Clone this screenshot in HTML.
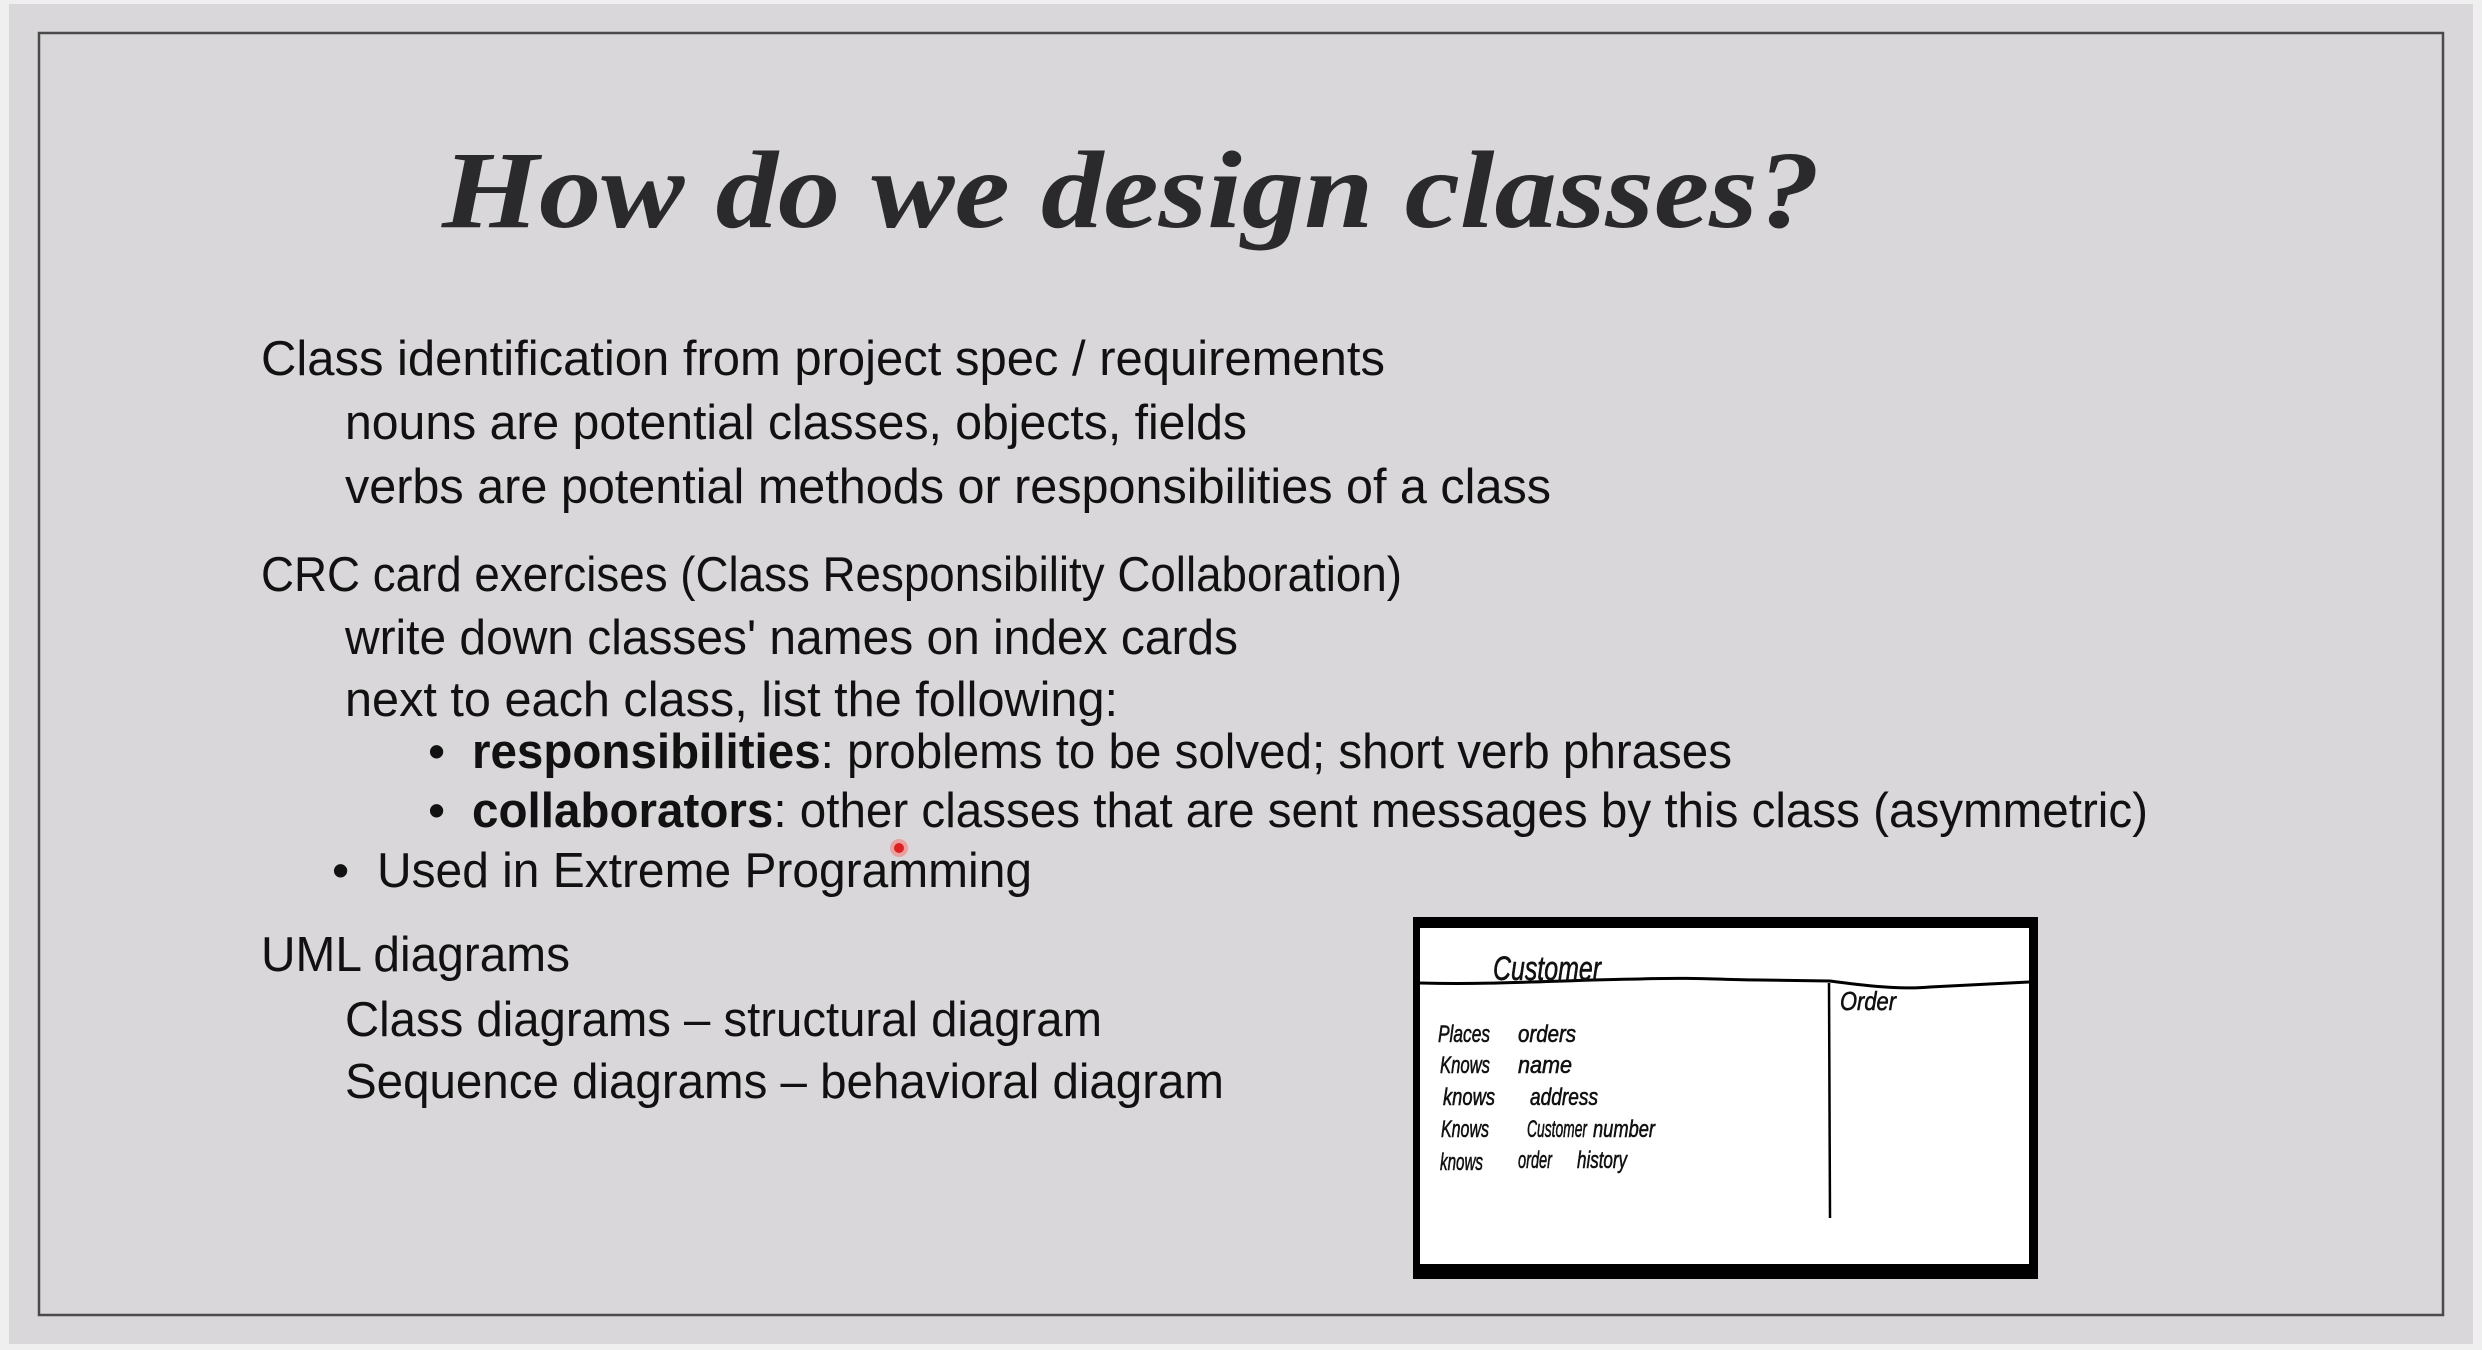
<!DOCTYPE html>
<html><head><meta charset="utf-8"><style>
html,body{margin:0;padding:0;background:#e6e5e6;}
svg{display:block}
</style></head><body>
<svg width="2482" height="1350" viewBox="0 0 2482 1350" xmlns="http://www.w3.org/2000/svg">
<rect x="0" y="0" width="2482" height="1350" fill="#f0eff0"/>
<rect x="9" y="4" width="2464" height="1340" fill="#d9d7d9"/>
<rect x="39" y="33" width="2404" height="1282" fill="#d9d7d9" stroke="#4a4a4a" stroke-width="2.5"/>
<text x="442" y="227" font-family="Liberation Serif, serif" font-weight="bold" font-style="italic" font-size="110" fill="#2a2a2c" textLength="1378" lengthAdjust="spacingAndGlyphs">How do we design classes?</text>
<g font-family="Liberation Sans, sans-serif" font-size="49" fill="#111">
<text x="261" y="375" textLength="1124" lengthAdjust="spacingAndGlyphs">Class identification from project spec / requirements</text>
<text x="345" y="439" textLength="902" lengthAdjust="spacingAndGlyphs">nouns are potential classes, objects, fields</text>
<text x="345" y="503" textLength="1206" lengthAdjust="spacingAndGlyphs">verbs are potential methods or responsibilities of a class</text>
<text x="261" y="591" textLength="1141" lengthAdjust="spacingAndGlyphs">CRC card exercises (Class Responsibility Collaboration)</text>
<text x="345" y="654" textLength="893" lengthAdjust="spacingAndGlyphs">write down classes' names on index cards</text>
<text x="345" y="716" textLength="773" lengthAdjust="spacingAndGlyphs">next to each class, list the following:</text>
<text x="428" y="768">•</text>
<text x="472" y="768" textLength="1260" lengthAdjust="spacingAndGlyphs"><tspan font-weight="bold">responsibilities</tspan>: problems to be solved; short verb phrases</text>
<text x="428" y="827">•</text>
<text x="472" y="827" textLength="1676" lengthAdjust="spacingAndGlyphs"><tspan font-weight="bold">collaborators</tspan>: other classes that are sent messages by this class  (asymmetric)</text>
<text x="332" y="887">•</text>
<text x="377" y="887" textLength="655" lengthAdjust="spacingAndGlyphs">Used in Extreme Programming</text>
<text x="261" y="971" textLength="309" lengthAdjust="spacingAndGlyphs">UML diagrams</text>
<text x="345" y="1036" textLength="757" lengthAdjust="spacingAndGlyphs">Class diagrams – structural diagram</text>
<text x="345" y="1098" textLength="879" lengthAdjust="spacingAndGlyphs">Sequence diagrams – behavioral diagram</text>
</g>
<circle cx="899" cy="848" r="9" fill="#f08a8a" opacity="0.7"/>
<circle cx="899" cy="848" r="5" fill="#e02020"/>
<!-- CRC card -->
<rect x="1413" y="917" width="625" height="362" fill="#000"/>
<rect x="1420" y="928" width="609" height="336" fill="#fff"/>
<path d="M1420 983 C1500 985 1560 980 1640 979 C1700 977 1720 980 1760 980 L1830 981 C1860 985 1900 990 1930 987 L2029 982" stroke="#000" stroke-width="3" fill="none"/>
<path d="M1829 983 L1830 1218" stroke="#000" stroke-width="2.5" fill="none"/>
<g font-family="Liberation Sans, sans-serif" font-style="italic" fill="#111" stroke="#111" stroke-width="0.6">
<text x="1493" y="980" font-size="34" textLength="108" lengthAdjust="spacingAndGlyphs">Customer</text>
<text x="1840" y="1010" font-size="26" textLength="56" lengthAdjust="spacingAndGlyphs">Order</text>
<g font-size="24">
<text x="1438" y="1042" textLength="52" lengthAdjust="spacingAndGlyphs">Places</text>
<text x="1518" y="1042" textLength="58" lengthAdjust="spacingAndGlyphs">orders</text>
<text x="1440" y="1073" textLength="50" lengthAdjust="spacingAndGlyphs">Knows</text>
<text x="1518" y="1073" textLength="54" lengthAdjust="spacingAndGlyphs">name</text>
<text x="1443" y="1105" textLength="52" lengthAdjust="spacingAndGlyphs">knows</text>
<text x="1530" y="1105" textLength="68" lengthAdjust="spacingAndGlyphs">address</text>
<text x="1441" y="1137" textLength="48" lengthAdjust="spacingAndGlyphs">Knows</text>
<text x="1527" y="1137" textLength="60" lengthAdjust="spacingAndGlyphs">Customer</text>
<text x="1593" y="1137" textLength="62" lengthAdjust="spacingAndGlyphs">number</text>
<text x="1440" y="1170" textLength="43" lengthAdjust="spacingAndGlyphs">knows</text>
<text x="1518" y="1168" textLength="34" lengthAdjust="spacingAndGlyphs">order</text>
<text x="1577" y="1168" textLength="50" lengthAdjust="spacingAndGlyphs">history</text>
</g>
</g>
</svg>
</body></html>
